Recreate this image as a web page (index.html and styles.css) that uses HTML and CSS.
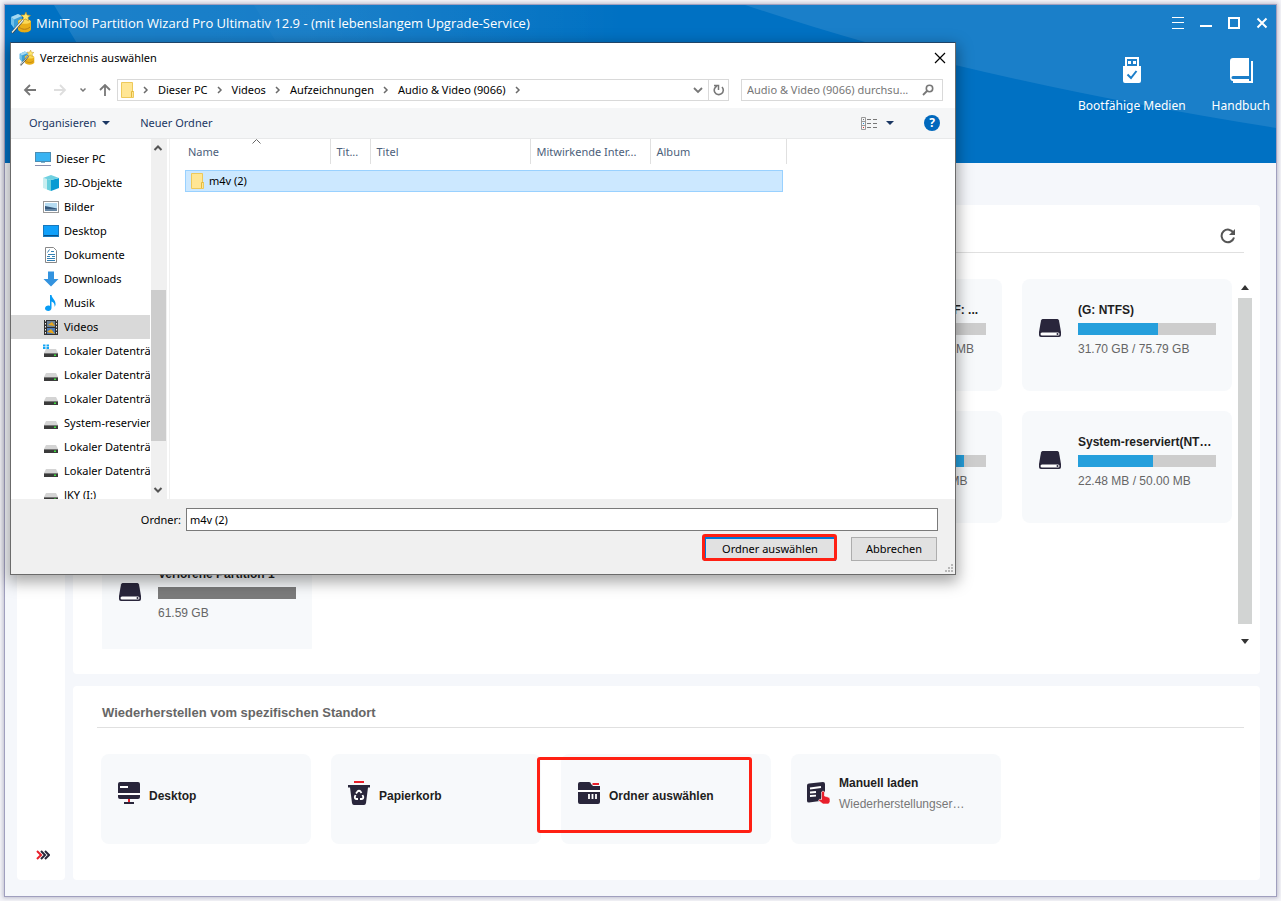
FILE: index.html
```html
<!DOCTYPE html>
<html lang="de">
<head>
<meta charset="utf-8">
<meta name="viewport" content="width=device-width, initial-scale=1">
<title>MiniTool Partition Wizard Pro Ultimativ 12.9</title>
<link rel="stylesheet" href="styles.css">
</head>
<body>
<svg class="defs" aria-hidden="true">
  <symbol id="logo" viewBox="0 0 22 22">
    <path d="M1 5 L8 2 L12 4 V14 L4 16 L1 12Z" fill="#3a9fd8"/>
    <path d="M1 5 L8 2 L12 4 L4 7.500Z" fill="#a5d9f2"/>
    <path d="M1 5 L4 7.500 V16 L1 12Z" fill="#6fc0ea"/>
    <path d="M8 9 C8 6.500 21 6.500 21 9.500 V17 C21 21.500 8 21.500 8 17Z" fill="#e9ae17"/>
    <path d="M9 15 C12 18 17 18 20 15" fill="none" stroke="#b87d12"/>
    <ellipse cx="14.500" cy="9.500" rx="6" ry="2.300" fill="#fbd956"/>
    <path d="M16 0 L17 3 L20.500 3.500 L18 5.500 L18.500 9 L15.500 7 L12.500 8.500 L13.500 5.500 L11 3 L14.500 3Z" fill="#ffe76a" stroke="#b98a1d" stroke-width=".6"/>
    <path d="M2 21 L13 8" stroke="#3c4a50" stroke-width="2.400"/><path d="M2 20.500 L13 8" stroke="#f0f2e8" stroke-width="1.200"/>
  </symbol>
  <symbol id="drive" viewBox="0 0 24 20">
    <path d="M4.500 1 H19.500 Q20.500 1 21 2.500 L23 14 V17 Q23 19 21 19 H3 Q1 19 1 17 V14 L3 2.500 Q3.500 1 4.500 1Z" fill="#29263b"/>
    <rect x="2.500" y="14.500" width="19" height="3" rx="1.500" fill="#fff"/><circle cx="19.500" cy="16" r="1" fill="#29263b"/>
  </symbol>
  <symbol id="disk" viewBox="0 0 16 16">
    <path d="M3 6 H13 L15 10 H1Z" fill="#d4d4d4"/><rect x="1" y="10" width="14" height="4" fill="#3b3b3b"/><rect x="1" y="10" width="14" height="1" fill="#777"/><rect x="11" y="11.500" width="2" height="1.500" fill="#3ee03e"/>
  </symbol>
  <symbol id="folder" viewBox="0 0 14 18">
    <path d="M1.500 1.500 H12.500 V10.500 H13.500 V16.500 H1.500Z" fill="#ffe694" stroke="#edc95a"/><path d="M11.500 16 V10.500 H13.500" fill="none" stroke="#e3b93d"/>
  </symbol>
  <symbol id="sep" viewBox="0 0 6 8"><path d="M1 1 L4 4 L1 7" fill="none" stroke="#6b6b6b" stroke-width="1.500"/></symbol>
</svg>

<div class="app">
  <header class="hero">
    <svg class="hero-art" viewBox="0 0 1271 158" preserveAspectRatio="none" aria-hidden="true">
      <defs><linearGradient id="fade"><stop offset="0" stop-color="#fff" stop-opacity=".11"/><stop offset=".45" stop-color="#fff" stop-opacity=".09"/><stop offset="1" stop-color="#fff" stop-opacity="0"/></linearGradient></defs>
      <path d="M49 0 H620 V60 H85Z" fill="url(#fade)"/>
      <path d="M249 0 H620 V60 H285Z" fill="url(#fade)" opacity=".2"/>
      <path d="M740 0 Q860 40 950 60 Q1100 96 1271 123 V0Z" fill="#fff" opacity=".1"/>
    </svg>
    <div class="titlebar">
      <svg class="logo-lg"><use href="#logo"/></svg>
      <h1>MiniTool Partition Wizard Pro Ultimativ 12.9 - (mit lebenslangem Upgrade-Service)</h1>
      <div class="win-controls">
        <button aria-label="Menü"><svg viewBox="0 0 12 12"><path d="M0 .5H12M0 5.500H12M0 11.500H12" stroke="#fff"/></svg></button>
        <button aria-label="Minimieren"><svg viewBox="0 0 12 12"><path d="M0 9H12" stroke="#fff" stroke-width="2"/></svg></button>
        <button aria-label="Maximieren"><svg viewBox="0 0 12 12"><rect x="1" y="1" width="10" height="10" fill="none" stroke="#fff" stroke-width="2"/></svg></button>
        <button aria-label="Schließen"><svg viewBox="0 0 12 12"><path d="M1.500 1.500 L10.500 10.500 M10.500 1.500 L1.500 10.500" stroke="#fff" stroke-width="2"/></svg></button>
      </div>
    </div>
    <nav class="tools">
      <button>
        <svg viewBox="0 0 24 28"><path d="M5 1 H19 V11 H21 V25 Q21 27 19 27 H5 Q3 27 3 25 V11 H5Z" fill="#fff"/><rect x="7" y="3" width="10" height="8" fill="#1c7ec9"/><rect x="8" y="5" width="3" height="3" fill="#fff"/><rect x="13" y="5" width="3" height="3" fill="#fff"/><rect x="3" y="10" width="18" height="3" fill="#fff"/><path d="M7.500 18.500 L11 22 L16.500 15" fill="none" stroke="#1c7ec9" stroke-width="2"/></svg>
        <span>Bootfähige Medien</span>
      </button>
      <button>
        <svg viewBox="0 0 24 28"><path d="M4 2 H20 V20 H4 Q2.500 20 2.500 21.500 Q2.500 23 4 23 H20 V25 H4 Q1 25 1 21 V5 Q1 2 4 2Z" fill="#fff"/><path d="M4 21.500H20" stroke="#1c7ec9" stroke-width="2"/><path d="M23 5 V26 H4" fill="none" stroke="#fff" stroke-width="2"/></svg>
        <span>Handbuch</span>
      </button>
    </nav>
  </header>

  <div class="workspace">
    <aside class="rail">
      <button aria-label="Erweitern"><svg viewBox="0 0 14 10"><path d="M1 1 L5 5 L1 9" stroke="#e81f2b"/><path d="M5 1 L9 5 L5 9 M9 1 L13 5 L9 9" stroke="#29263b"/></svg></button>
    </aside>
    <main>
      <section class="panel drives">
        <div class="panel-head"><button class="refresh" aria-label="Aktualisieren"><svg viewBox="0 0 16 16"><path d="M13.500 5 A6.300 6.300 0 1 0 14 9.500" fill="none" stroke="#555" stroke-width="2"/><path d="M15 1 V7 H9Z" fill="#555"/></svg></button></div>
        <div class="scroller">
          <div class="card-grid">
            <article class="drive-card col-4"><svg><use href="#drive"/></svg><div><h3>System-reserviert(F: ...</h3><div class="bar"><i style="width:40%"></i></div><p>188.00 MB / 450.00 MB</p></div></article>
            <article class="drive-card"><svg><use href="#drive"/></svg><div><h3>(G: NTFS)</h3><div class="bar"><i style="width:58%"></i></div><p>31.70 GB / 75.79 GB</p></div></article>
            <article class="drive-card col-4"><svg><use href="#drive"/></svg><div><h3>(H: NTFS)</h3><div class="bar"><i style="width:84%"></i></div><p>84.20 MB / 100.00 MB</p></div></article>
            <article class="drive-card"><svg><use href="#drive"/></svg><div><h3>System-reserviert(NT…</h3><div class="bar"><i style="width:54%"></i></div><p>22.48 MB / 50.00 MB</p></div></article>
            <article class="drive-card lost"><svg><use href="#drive"/></svg><div><h3>Verlorene Partition 1</h3><div class="bar"></div><p>61.59 GB</p></div></article>
          </div>
          <div class="scrollbar">
            <svg viewBox="0 0 8 5"><path d="M0 5 L4 0 L8 5Z" fill="#333"/></svg>
            <div class="thumb"></div>
            <svg viewBox="0 0 8 5"><path d="M0 0 L4 5 L8 0Z" fill="#333"/></svg>
          </div>
        </div>
      </section>

      <section class="panel places">
        <h2>Wiederherstellen vom spezifischen Standort</h2>
        <div class="card-grid">
          <button class="place-card">
            <svg viewBox="0 0 24 24"><rect x="1" y="1" width="22" height="17" rx="2" fill="#29263b"/><rect x="1" y="12" width="22" height="2" fill="#fff"/><path d="M3 6H11" stroke="#fff" stroke-width="2"/><path d="M12 18V22" stroke="#e81f2b" stroke-width="2"/><path d="M7 22H17" stroke="#29263b" stroke-width="2"/></svg>
            <span>Desktop</span>
          </button>
          <button class="place-card">
            <svg viewBox="0 0 24 24"><path d="M7 1H17" stroke="#e81f2b" stroke-width="2"/><path d="M1 4 H23 V6.500 H21 L19 22 Q18.700 24 17 24 H7 Q5.300 24 5 22 L3 6.500 H1Z" fill="#29263b"/><g fill="none" stroke="#fff" stroke-width="1.800"><path d="M9 12.500 L10.500 10.500 Q12 9 13.500 10.500 L14.500 12"/><path d="M8.500 14 L7.800 16 Q7.800 18 9.500 18 H11"/><path d="M15.500 14 L16.300 16 Q16.300 18 14.500 18 H13"/></g></svg>
            <span>Papierkorb</span>
          </button>
          <button class="place-card">
            <svg viewBox="0 0 24 24"><path d="M1 9 V3 Q1 1 3 1 H12 Q14 1 14 3 L16 5 H23 V9Z M1 11 H23 V21 Q23 23 21 23 H3 Q1 23 1 21Z" fill="#29263b"/><path d="M1 10H23" stroke="#fff" stroke-width="2"/><path d="M15.500 3H22" stroke="#e81f2b" stroke-width="2"/><path d="M12 13V18 M15.500 13V18 M19 13V18" stroke="#fff" stroke-width="1.800"/></svg>
            <span>Ordner auswählen</span>
          </button>
          <button class="place-card with-note">
            <svg viewBox="0 0 24 24"><path d="M2 2.500 L16 1 Q18 1 18 3 V10 L13 20 L2 21.500 Q0 21.500 0 20 V4.500 Q0 2.700 2 2.500Z" fill="#29263b"/><path d="M3 7.500 L14 6 M3 11.500 L9 11 M3 15 L9 14.700" stroke="#fff" stroke-width="1.800"/><path d="M14.500 11 Q16 9 17.500 11 V15 L21 16 Q23 16.500 23 18 V21 L21.500 23 H16 L11.500 19.500 Q12 17.500 14.500 18.500Z" fill="#e81f2b" stroke="#fff" stroke-width=".6"/></svg>
            <span>Manuell laden<small>Wiederherstellungser…</small></span>
          </button>
          <div class="marker marker-place"></div>
        </div>
      </section>
    </main>
  </div>
</div>

<div class="dialog" role="dialog" aria-labelledby="dlg-title">
  <div class="dlg-title">
    <svg class="logo-sm"><use href="#logo"/></svg><h2 id="dlg-title">Verzeichnis auswählen</h2>
    <button aria-label="Schließen"><svg viewBox="0 0 12 12"><path d="M1 1 L11 11 M11 1 L1 11" stroke="#000" stroke-width="1.200"/></svg></button>
  </div>
  <div class="dlg-nav">
    <div class="history">
      <button aria-label="Zurück"><svg viewBox="0 0 14 12"><path d="M13 6H2 M7 1 L2 6 L7 11" stroke="#777" stroke-width="1.800"/></svg></button>
      <button aria-label="Vorwärts"><svg viewBox="0 0 14 12"><path d="M1 6H12 M7 1 L12 6 L7 11" stroke="#dedede" stroke-width="1.800"/></svg></button>
      <button class="narrow" aria-label="Verlauf"><svg viewBox="0 0 6 12"><path d="M.5 4.500 L3 7 L5.500 4.500" stroke="#777" stroke-width="1.500"/></svg></button>
      <button aria-label="Nach oben"><svg viewBox="0 0 14 12"><path d="M7 12V1 M2 6 L7 1 L12 6" stroke="#777" stroke-width="1.800"/></svg></button>
    </div>
    <div class="address">
      <svg class="folder"><use href="#folder"/></svg>
      <svg class="sep"><use href="#sep"/></svg><a href="#">Dieser PC</a>
      <svg class="sep"><use href="#sep"/></svg><a href="#">Videos</a>
      <svg class="sep"><use href="#sep"/></svg><a href="#">Aufzeichnungen</a>
      <svg class="sep"><use href="#sep"/></svg><a href="#">Audio &amp; Video (9066)</a>
      <svg class="sep"><use href="#sep"/></svg>
      <button class="drop" aria-label="Verlauf anzeigen"><svg viewBox="0 0 10 8"><path d="M1 2 L5 6 L9 2" stroke="#777" stroke-width="1.800"/></svg></button>
      <button class="reload" aria-label="Neu laden"><svg viewBox="0 0 12 12"><path d="M4 2 A4.500 4.500 0 1 0 9 3" stroke="#777" stroke-width="1.600"/><path d="M1 1.500 H5.500 V6" stroke="#777" stroke-width="1.500"/></svg></button>
    </div>
    <label class="search"><input type="text" aria-label="Suchen" placeholder="Audio &amp; Video (9066) durchsu...">
      <svg viewBox="0 0 12 12"><circle cx="7.500" cy="4.500" r="3.200" stroke="#777" stroke-width="1.600"/><path d="M5 7 L1 11" stroke="#777" stroke-width="1.800"/></svg></label>
  </div>
  <div class="dlg-tools">
    <button>Organisieren <svg class="caret" viewBox="0 0 8 4"><path d="M0 0H8L4 4Z" fill="#1b3763"/></svg></button>
    <button>Neuer Ordner</button>
    <button class="view" aria-label="Ansicht"><svg class="view-icon" viewBox="0 0 17 13"><path d="M.5 .5H4.500V12.500H.5Z M.5 4.500H4.500 M.5 8.500H4.500" fill="none" stroke="#999"/><path d="M6 2.500H10M12 2.500H16M6 6.500H10M12 6.500H16M6 10.500H10M12 10.500H16" stroke="#777"/><path d="M2 2.500H3" stroke="#777"/><path d="M2 6.500H3" stroke="#2792dd"/><path d="M2 10.500H3" stroke="#e03030"/></svg><svg class="caret" viewBox="0 0 8 4"><path d="M0 0H8L4 4Z" fill="#1b3763"/></svg></button>
    <button class="help" aria-label="Hilfe">?</button>
  </div>
  <div class="dlg-body">
    <ul class="tree">
      <li class="root"><svg viewBox="0 0 16 16"><rect x=".5" y="1.500" width="15" height="9" fill="#39b3f2" stroke="#4b8db3"/><path d="M6 11.500H10" stroke="#7fb4d0"/><path d="M0 14.500H16" stroke="#8a8fae"/></svg>Dieser PC</li>
      <li><svg viewBox="0 0 16 16"><path d="M0 3 L8 5 V16 L0 13Z" fill="#c9eef0"/><path d="M8 5 L16 3 V13 L8 16Z" fill="#079bd3"/><path d="M0 3 L8 0 L16 3 L8 5Z" fill="#6fd0e0"/><path d="M4 4V14.500L8 16V5Z" fill="#68cfdd"/></svg>3D-Objekte</li>
      <li><svg viewBox="0 0 16 16"><rect x=".5" y="2.500" width="15" height="11" fill="#fff" stroke="#999"/><rect x="2" y="4" width="12" height="8" fill="#b6dcf2"/><path d="M2 7 L7 8 L14 9.500 V12 H2Z" fill="#35597d"/><path d="M2 11H14" stroke="#98b6cd"/></svg>Bilder</li>
      <li><svg viewBox="0 0 16 16"><rect x=".5" y="2.500" width="15" height="11" fill="#10a0fa" stroke="#1878bc"/><path d="M1 12.500H15" stroke="#07528b"/></svg>Desktop</li>
      <li><svg viewBox="0 0 16 16"><path d="M2.500 .5 H10.500 L13.500 3.500 V15.500 H2.500Z" fill="#fff" stroke="#888"/><path d="M4.500 5.500 L6.500 2.500 M5 7.500H12 M4 9.500H7M9 9.500H12 M4 11.500H12 M4 13.500H12" stroke="#3581b4"/><path d="M8 4.500H11" stroke="#3581b4"/></svg>Dokumente</li>
      <li><svg viewBox="0 0 16 16"><path d="M5 .5H11V8H15.500L8 15.500L.5 8H5Z" fill="#3393df"/></svg>Downloads</li>
      <li><svg viewBox="0 0 16 16"><path d="M7 0 H8.500 C9 4 13 4.500 12.500 10 L11.500 12 C12 8 10 7 8.500 6.500 V13 C8.500 17 2 16.500 2 13.500 C2 11 5 10 7 11Z" fill="#079cf5"/></svg>Musik</li>
      <li class="selected"><svg viewBox="0 0 16 16"><rect x="1" y="1" width="14" height="15" fill="#303030"/><path d="M2.500 1V16 M13.500 1V16" stroke="#eee" stroke-dasharray="1.500 1.500"/><rect x="4" y="2" width="8" height="6" fill="#6d8498"/><path d="M5 6 L9 3 L12 7Z" fill="#e9a51a"/><rect x="4" y="9" width="8" height="6" fill="#4e7cb8"/><path d="M4 13 L8 10 L12 15Z" fill="#e9a51a"/></svg>Videos</li>
      <li><svg viewBox="0 0 16 16"><use href="#disk"/><path d="M0 2.500H6M0 5H6" stroke="#16a5f3" stroke-width="2" stroke-dasharray="2.500 1"/></svg>Lokaler Datenträger (C:)</li>
      <li><svg><use href="#disk"/></svg>Lokaler Datenträger (D:)</li>
      <li><svg><use href="#disk"/></svg>Lokaler Datenträger (E:)</li>
      <li><svg><use href="#disk"/></svg>System-reserviert (F:)</li>
      <li><svg><use href="#disk"/></svg>Lokaler Datenträger (G:)</li>
      <li><svg><use href="#disk"/></svg>Lokaler Datenträger (H:)</li>
      <li><svg><use href="#disk"/></svg>JKY (I:)</li>
    </ul>
    <div class="tree-scroll">
      <svg viewBox="0 0 10 8"><path d="M1.500 6 L5 2.500 L8.500 6" stroke="#555" stroke-width="2"/></svg>
      <div class="thumb"></div>
      <svg viewBox="0 0 10 8"><path d="M1.500 2 L5 5.500 L8.500 2" stroke="#555" stroke-width="2"/></svg>
    </div>
    <div class="files">
      <table>
        <colgroup><col class="c-name"><col class="c-num"><col class="c-title"><col class="c-artist"><col class="c-album"></colgroup>
        <thead><tr><th>Name<svg class="sort" viewBox="0 0 9 5"><path d="M.5 4.500 L4.500 .5 L8.500 4.500" stroke="#666"/></svg></th><th>Tit...</th><th>Titel</th><th>Mitwirkende Inter...</th><th>Album</th></tr></thead>
        <tbody><tr><td colspan="5"><div class="file-row"><svg class="folder"><use href="#folder"/></svg>m4v (2)</div></td></tr></tbody>
      </table>
    </div>
  </div>
  <form class="dlg-foot">
    <div class="field"><label for="folder">Ordner:</label><input id="folder" type="text" value="m4v (2)"></div>
    <div class="actions">
      <div class="marked"><button type="button" class="primary">Ordner auswählen</button><div class="marker"></div></div>
      <button type="button">Abbrechen</button>
    </div>
    <svg class="grip" viewBox="0 0 8 8"><path d="M6 1H8M3 4H5M6 4H8M0 7H2M3 7H5M6 7H8" stroke="#b8b8b8" stroke-width="2"/></svg>
  </form>
</div>
</body>
</html>
```
FILE: styles.css
```css
* { box-sizing: border-box; }
body {
  margin: 0;
  padding: 5px;
  height: 100vh;
  background: #f4f4f8;
  font: 12px/16px "Noto Sans", "Open Sans", sans-serif;
  color: #000;
  overflow: hidden;
}
h1, h2, h3, p, ul { margin: 0; padding: 0; }
ul { list-style: none; }
button { border: 0; padding: 0; background: none; font: inherit; color: inherit; cursor: pointer; }
svg { display: block; flex: none; fill: none; }
a { color: inherit; text-decoration: none; }
.defs { position: absolute; width: 0; height: 0; }

/* Application window */
.app {
  display: flex;
  flex-direction: column;
  height: calc(100vh - 10px);
  background: #f5f7fb;
  box-shadow: 0 0 0 1px #a09fbe, 0 0 4px 2px #bdbccd;
}
.hero { position: relative; height: 158px; background: #0071c3; color: #fff; }
.hero-art { position: absolute; inset: 0; width: 100%; height: 100%; }
.titlebar { position: relative; display: flex; align-items: center; height: 36px; padding: 0 8px 0 5px; }
.logo-lg { width: 22px; height: 22px; }
.titlebar h1 { flex: 1; margin-left: 4px; font-family: "Open Sans", "Noto Sans", sans-serif; font-size: 13px; font-weight: 400; white-space: nowrap; }
.win-controls { display: flex; gap: 16px; }
.win-controls svg { width: 12px; height: 12px; }
.tools { position: relative; display: flex; justify-content: flex-end; gap: 26px; padding: 15px 6px 0 0; font-size: 12px; }
.tools button { display: flex; flex-direction: column; align-items: center; gap: 12px; line-height: 20px; }
.tools svg { width: 24px; height: 28px; }

.workspace { display: flex; flex: 1; gap: 8px; min-height: 0; padding: 42px 16px 16px 12px; }
.rail { display: flex; flex-direction: column; justify-content: flex-end; align-items: center; width: 48px; padding: 0 0 20px 4px; border-radius: 4px; background: #fff; }
.rail svg { width: 14px; height: 10px; stroke-width: 2; }
main { display: flex; flex: 1; flex-direction: column; gap: 12px; min-width: 0; font-family: "Liberation Sans", Arial, sans-serif; }
.panel { border-radius: 4px; background: #fff; }
.drives { display: flex; flex: 1; flex-direction: column; min-height: 0; padding: 0 8px 25px 24px; }
.panel-head { display: flex; align-items: center; justify-content: flex-end; height: 48px; margin-right: 8px; padding: 14px 8px 0 0; border-bottom: 1px solid #e0e0e0; }
.refresh svg { width: 16px; height: 16px; }
.scroller { display: flex; flex: 1; justify-content: space-between; min-height: 0; margin-top: 26px; padding-left: 5px; overflow: hidden; }
.card-grid { position: relative; display: grid; grid-template-columns: repeat(5, 210px); gap: 20px; align-content: start; }
.drive-card { display: flex; gap: 16px; height: 112px; padding: 22px 16px; border-radius: 8px; background: #f7f9fb; }
.drive-card > svg { width: 24px; height: 20px; margin-top: 17px; }
.drive-card > div { flex: 1; min-width: 0; }
.col-4 { grid-column: 4; }
.drive-card h3 { font-size: 12px; line-height: 18px; color: #1e1e1e; white-space: nowrap; }
.bar { height: 12px; margin: 4px 0 5px; background: #cdcdcd; }
.bar i { display: block; height: 100%; background: #259fdc; }
.lost .bar { background: #7b7b7b; }
.drive-card p { color: #666; line-height: 18px; }
.scrollbar { display: flex; flex-direction: column; align-items: center; width: 14px; padding: 6px 0 5px; }
.scrollbar svg { width: 8px; height: 5px; }
.scrollbar .thumb { flex: 1; width: 14px; margin: 8px 0 15px; background: #d2d4d3; }

.places { padding: 16px 16px 36px 24px; }
.places h2 { padding: 0 0 4px 5px; border-bottom: 1px solid #e0e0e0; font-size: 13px; line-height: 21px; color: #666; }
.places .card-grid { margin: 26px 0 0 4px; grid-template-columns: repeat(4, 210px); }
.place-card { display: flex; align-items: center; gap: 8px; height: 90px; padding: 0 16px 6px; border-radius: 8px; background: #f7f9fb; color: #1e1e1e; font-weight: 700; text-align: left; }
.place-card svg { width: 24px; height: 24px; margin-bottom: 6px; }
.place-card small { display: block; margin-top: 5px; color: #777; font-size: 12px; font-weight: 400; }
.with-note span { padding-bottom: 6px; }

/* Red highlight frames */
.marker { position: absolute; border: 3px solid #ff2013; border-radius: 3px; pointer-events: none; }
.marker-place { left: 436px; top: 3px; width: 215px; height: 76px; }

/* Folder picker */
.dialog {
  position: absolute;
  left: 10px;
  top: 42px;
  width: 946px;
  display: flex;
  flex-direction: column;
  border: 1px solid #6b6b6b;
  border-top-color: #1f4468;
  background: #fff;
  box-shadow: 0 5px 14px 2px rgba(0, 0, 0, .35);
  font-size: 11px;
}
.dlg-title { display: flex; align-items: center; height: 30px; padding: 0 9px 0 8px; }
.dlg-title h2 { flex: 1; margin-left: 5px; font-size: 11px; font-weight: 400; }
.dlg-title button svg { width: 12px; height: 12px; }
.logo-sm { width: 16px; height: 16px; }
.dlg-nav { display: flex; height: 35px; padding: 6px 12px 7px; }
.history { display: flex; align-items: center; width: 94px; gap: 16px; }
.history svg { width: 14px; height: 12px; }
.history .narrow svg { width: 6px; }
.history button + .narrow { margin-left: -3px; }
.history .narrow + button { margin-left: -4px; }
.address { display: flex; flex: 1; align-items: center; border: 1px solid #d9d9d9; padding-left: 2px; }
.folder { width: 14px; height: 18px; }
.sep { width: 6px; height: 8px; margin: 0 9px; }
.address > .drop { display: grid; place-items: center; width: 20px; height: 100%; margin-left: auto; }
.drop svg { width: 10px; height: 8px; }
.reload { display: grid; place-items: center; width: 20px; height: 100%; border-left: 1px solid #d9d9d9; }
.reload svg { width: 12px; height: 12px; }
.search { display: flex; align-items: center; width: 202px; margin-left: 12px; padding: 0 8px 0 5px; border: 1px solid #d9d9d9; }
.search input { flex: 1; min-width: 0; padding: 0; border: 0; outline: 0; font: inherit; }
.search input::placeholder { color: #767676; opacity: 1; }
.search svg { width: 12px; height: 12px; }
.dlg-tools { display: flex; align-items: center; gap: 30px; height: 31px; padding: 0 15px 0 18px; border-bottom: 1px solid #e8e9ea; background: #f5f6f7; color: #1b3763; }
.dlg-tools button { display: flex; align-items: center; gap: 6px; }
.caret { width: 8px; height: 4px; }
.dlg-tools .view { gap: 8px; margin-left: auto; }
.view-icon { width: 17px; height: 13px; }
.dlg-tools .help { justify-content: center; width: 16px; height: 16px; border-radius: 50%; background: #0068bd; color: #fff; font-size: 12px; font-weight: 700; }
.dlg-body { display: flex; height: 360px; }
.tree { width: 139px; padding-top: 8px; overflow: hidden; }
.tree li { display: flex; align-items: center; gap: 5px; height: 24px; padding-left: 32px; white-space: nowrap; }
.tree .root { padding-left: 24px; }
.tree .selected { background: #d9d9d9; }
.tree svg { width: 16px; height: 16px; }
.tree-scroll { display: flex; flex-direction: column; align-items: flex-start; width: 16px; margin-left: 1px; padding: 5px 0; background: #f0f0f0; }
.tree-scroll svg { width: 10px; height: 8px; margin-left: 2px; }
.tree-scroll .thumb { width: 15px; height: 151px; margin: auto 0 45px; background: #cdcdcd; }
.files { flex: 1; margin-left: 2px; padding-left: 15px; border-left: 1px solid #f0f0f0; }
table { width: 601px; border-collapse: collapse; table-layout: fixed; }
.c-name { width: 145px; }
.c-num { width: 40px; }
.c-title { width: 160px; }
.c-artist { width: 120px; }
.c-album { width: 136px; }
th { position: relative; height: 25px; padding: 0 0 0 6px; border-right: 1px solid #e0e0e0; color: #4c607a; font-weight: 400; text-align: left; white-space: nowrap; }
th:first-child { padding-left: 3px; }
.sort { position: absolute; top: 0; left: 67px; width: 9px; height: 5px; }
td { padding: 6px 3px 0 0; }
.file-row { display: flex; align-items: center; gap: 5px; height: 22px; padding-left: 4px; border: 1px solid #99d1ff; background: #cce8ff; }
.dlg-foot { position: relative; padding: 9px 17px 13px; background: #f0f0f0; }
.field { display: flex; align-items: center; justify-content: flex-end; gap: 5px; }
.field input { width: 752px; height: 23px; padding: 0 3px; border: 1px solid #7a7a7a; outline: 0; background: #fff; font: inherit; }
.actions { display: flex; justify-content: flex-end; gap: 15px; margin-top: 6px; padding-right: 1px; }
.actions button { width: 86px; height: 24px; border: 1px solid #adadad; background: #e1e1e1; }
.actions .primary { width: 132px; border: 2px solid #0078d7; }
.marked { position: relative; }
.marked .marker { inset: -3px -1px 0 -2px; }
.grip { position: absolute; right: 2px; bottom: 2px; width: 8px; height: 8px; }
```
